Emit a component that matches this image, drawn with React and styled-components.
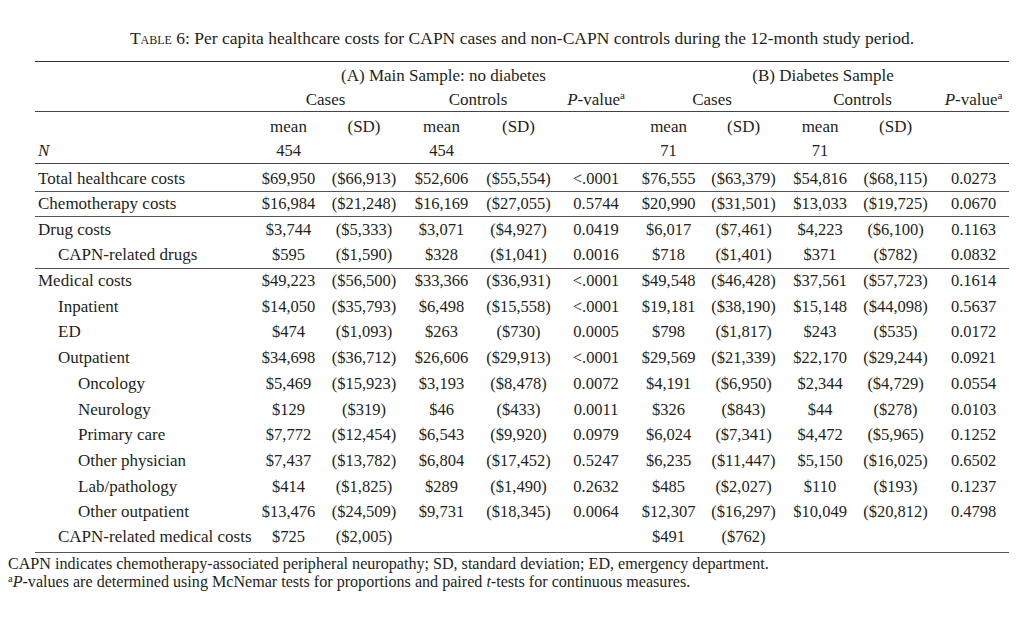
import React from "react";
import styled, { createGlobalStyle } from "styled-components";

const Global = createGlobalStyle`
  html, body { margin: 0; padding: 0; background: #fff; }
  body { font-family: "Liberation Serif", "Times New Roman", serif; color: #231f20; }
`;

const Page = styled.div`
  width: 1023px;
  padding-top: 28px;
`;

const Title = styled.div`
  width: 974px;
  margin-left: 35px;
  text-align: center;
  font-size: 17.5px;
  line-height: 20px;
`;

const Caps = styled.span`
  font-variant: small-caps;
`;

const Table = styled.table`
  margin-left: 35px;
  margin-top: 13px;
  width: 974px;
  table-layout: fixed;
  border-collapse: collapse;
  border-top: 1.5px solid #333;
  font-size: 17px;
`;

const HeadRow = styled.tr`
  height: ${(p) => p.$h}px;
  border-bottom: ${(p) => (p.$rule ? "1px solid #444" : "none")};
  & > td { padding-top: ${(p) => p.$pt || 0}px; }
`;

const BodyRow = styled.tr`
  height: ${(p) => 25.7 + (p.$first ? 2 : 0) + (p.$last ? 2 : 0)}px;
  border-bottom: ${(p) => (p.$rule ? "1px solid #555" : "none")};
  & > td {
    padding-top: ${(p) => (p.$first ? 4 : 0)}px;
    padding-bottom: ${(p) => (p.$last ? 3 : 0)}px;
  }
`;

const Cell = styled.td`
  padding: 0;
  text-align: center;
  white-space: nowrap;
  vertical-align: middle;
  line-height: 18px;
  font-size: ${(p) => (p.$num ? "16.5px" : "17px")};
`;

const Label = styled.td`
  padding: 0 0 0 ${(p) => 3 + p.$level * 20}px;
  text-align: left;
  white-space: nowrap;
  overflow: visible;
  vertical-align: middle;
  line-height: 18px;
  font-size: 17px;
`;

const Sup = styled.sup`
  font-size: 0.65em;
  line-height: 0;
  vertical-align: 0.5em;
`;

const Footer = styled.div`
  margin-left: 8px;
  margin-top: 2px;
  font-size: 16.1px;
  line-height: 18px;
`;

const PVal = () => (
  <>
    <i>P</i>-value<Sup>a</Sup>
  </>
);

const widths = [215, 77, 74, 81, 73, 82, 63, 87, 66, 85, 71];

const rows = [
  ["Total healthcare costs", 0, true, ["$69,950", "($66,913)", "$52,606", "($55,554)", "<.0001", "$76,555", "($63,379)", "$54,816", "($68,115)", "0.0273"]],
  ["Chemotherapy costs", 0, true, ["$16,984", "($21,248)", "$16,169", "($27,055)", "0.5744", "$20,990", "($31,501)", "$13,033", "($19,725)", "0.0670"]],
  ["Drug costs", 0, false, ["$3,744", "($5,333)", "$3,071", "($4,927)", "0.0419", "$6,017", "($7,461)", "$4,223", "($6,100)", "0.1163"]],
  ["CAPN-related drugs", 1, true, ["$595", "($1,590)", "$328", "($1,041)", "0.0016", "$718", "($1,401)", "$371", "($782)", "0.0832"]],
  ["Medical costs", 0, false, ["$49,223", "($56,500)", "$33,366", "($36,931)", "<.0001", "$49,548", "($46,428)", "$37,561", "($57,723)", "0.1614"]],
  ["Inpatient", 1, false, ["$14,050", "($35,793)", "$6,498", "($15,558)", "<.0001", "$19,181", "($38,190)", "$15,148", "($44,098)", "0.5637"]],
  ["ED", 1, false, ["$474", "($1,093)", "$263", "($730)", "0.0005", "$798", "($1,817)", "$243", "($535)", "0.0172"]],
  ["Outpatient", 1, false, ["$34,698", "($36,712)", "$26,606", "($29,913)", "<.0001", "$29,569", "($21,339)", "$22,170", "($29,244)", "0.0921"]],
  ["Oncology", 2, false, ["$5,469", "($15,923)", "$3,193", "($8,478)", "0.0072", "$4,191", "($6,950)", "$2,344", "($4,729)", "0.0554"]],
  ["Neurology", 2, false, ["$129", "($319)", "$46", "($433)", "0.0011", "$326", "($843)", "$44", "($278)", "0.0103"]],
  ["Primary care", 2, false, ["$7,772", "($12,454)", "$6,543", "($9,920)", "0.0979", "$6,024", "($7,341)", "$4,472", "($5,965)", "0.1252"]],
  ["Other physician", 2, false, ["$7,437", "($13,782)", "$6,804", "($17,452)", "0.5247", "$6,235", "($11,447)", "$5,150", "($16,025)", "0.6502"]],
  ["Lab/pathology", 2, false, ["$414", "($1,825)", "$289", "($1,490)", "0.2632", "$485", "($2,027)", "$110", "($193)", "0.1237"]],
  ["Other outpatient", 2, false, ["$13,476", "($24,509)", "$9,731", "($18,345)", "0.0064", "$12,307", "($16,297)", "$10,049", "($20,812)", "0.4798"]],
  ["CAPN-related medical costs", 1, true, ["$725", "($2,005)", "", "", "", "$491", "($762)", "", "", ""]],
];

export default function App() {
  return (
    <Page>
      <Global />
      <Title>
        <Caps>Table</Caps> 6: Per capita healthcare costs for CAPN cases and non-CAPN controls during the 12-month study period.
      </Title>
      <Table>
        <colgroup>
          {widths.map((w, i) => (
            <col key={i} style={{ width: w }} />
          ))}
        </colgroup>
        <tbody>
          <HeadRow $h={28}>
            <Cell />
            <Cell colSpan={5}>(A) Main Sample: no diabetes</Cell>
            <Cell colSpan={5}>(B) Diabetes Sample</Cell>
          </HeadRow>
          <HeadRow $h={22} $rule>
            <Cell />
            <Cell colSpan={2}>Cases</Cell>
            <Cell colSpan={2}>Controls</Cell>
            <Cell><PVal /></Cell>
            <Cell colSpan={2}>Cases</Cell>
            <Cell colSpan={2}>Controls</Cell>
            <Cell><PVal /></Cell>
          </HeadRow>
          <HeadRow $h={27} $pt={4}>
            <Cell />
            <Cell>mean</Cell>
            <Cell>(SD)</Cell>
            <Cell>mean</Cell>
            <Cell>(SD)</Cell>
            <Cell />
            <Cell>mean</Cell>
            <Cell>(SD)</Cell>
            <Cell>mean</Cell>
            <Cell>(SD)</Cell>
            <Cell />
          </HeadRow>
          <HeadRow $h={25} $pt={1} $rule>
            <Label $level={0}><i>N</i></Label>
            <Cell $num>454</Cell>
            <Cell />
            <Cell $num>454</Cell>
            <Cell />
            <Cell />
            <Cell $num>71</Cell>
            <Cell />
            <Cell $num>71</Cell>
            <Cell />
            <Cell />
          </HeadRow>
          {rows.map(([label, level, rule, vals], r) => (
            <BodyRow key={label} $rule={rule} $first={r === 0} $last={r === rows.length - 1}>
              <Label $level={level}>{label}</Label>
              {vals.map((v, i) => (
                <Cell key={i} $num>{v}</Cell>
              ))}
            </BodyRow>
          ))}
        </tbody>
      </Table>
      <Footer>
        <div>CAPN indicates chemotherapy-associated peripheral neuropathy; SD, standard deviation; ED, emergency department.</div>
        <div>
          <Sup>a</Sup><i>P</i>-values are determined using McNemar tests for proportions and paired <i>t</i>-tests for continuous measures.
        </div>
      </Footer>
    </Page>
  );
}
